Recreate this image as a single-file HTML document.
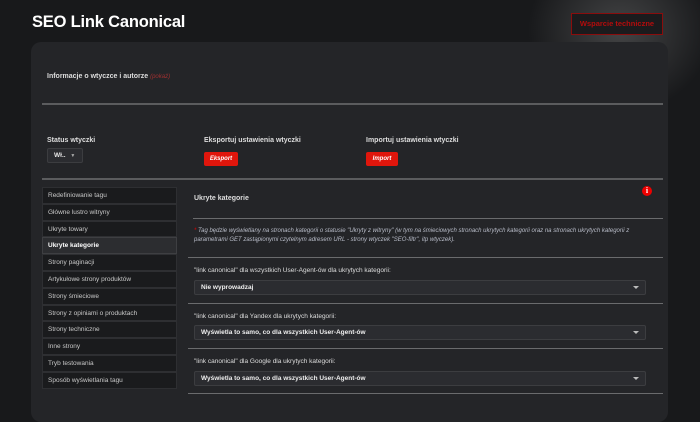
<!DOCTYPE html>
<html><head><meta charset="utf-8"><style>
*{box-sizing:border-box;margin:0;padding:0}
body{width:700px;height:415px;overflow:hidden;background:#18191b;font-family:"Liberation Sans",sans-serif;color:#e6e6e6;position:relative}
.glow{position:absolute;left:520px;top:-60px;width:200px;height:180px;background:radial-gradient(ellipse at center,rgba(120,120,120,.45),rgba(40,40,40,0) 65%)}
h1{position:absolute;left:32px;top:13px;font-size:16.5px;font-weight:bold;color:#fff;letter-spacing:-.2px}
.sup{position:absolute;left:571px;top:13px;width:92px;height:22px;border:1px solid #8a0d0d;background:#1b1b1d;color:#b40c0c;font-size:7.5px;font-weight:bold;text-align:center;line-height:20px}
.panel{position:absolute;left:31px;top:42px;width:637px;height:380px;background:#242528;border-radius:10px}
.a{position:absolute;font-size:7px;font-weight:bold;color:#ddd}
.hr{position:absolute;height:2px;background:#5b5c5e}
.btn{position:absolute;background:#e0160c;color:#fff;font-size:6px;font-style:italic;font-weight:bold;border-radius:2px;text-align:center;line-height:14px;height:14px}
.side{position:absolute;left:42px;top:187px;width:135px}
.side div{height:16.8px;border:1px solid #2e2f32;background:#1a1b1d;font-size:6.5px;color:#c8c8c8;padding-left:5px;line-height:15px;margin-bottom:0}
.side .on{background:#2c2d30;border-color:#3e3f42;color:#fff;font-weight:bold}
.sel{position:absolute;left:194px;width:452px;height:15px;background:#2b2c30;border:1px solid #3c3d40;border-radius:2px;font-size:6.5px;font-weight:bold;color:#eee;padding-left:6px;line-height:13px}
.sel:after{content:"";position:absolute;right:6px;top:5px;border:3px solid transparent;border-top:3.5px solid #bbb}
.lbl{position:absolute;left:194px;font-size:6.5px;color:#ddd}
</style></head><body>
<div class="glow"></div>
<h1>SEO Link Canonical</h1>
<div class="sup">Wsparcie techniczne</div>
<div class="panel"></div>
<div class="a" style="left:47px;top:73px">Informacje o wtyczce i autorze <span style="color:#a03030;font-style:italic;font-weight:normal;font-size:6px">(pokaż)</span></div>
<div class="hr" style="left:42px;top:103px;width:621px"></div>
<div class="a" style="left:47px;top:137px">Status wtyczki</div>
<div style="position:absolute;left:47px;top:148px;width:36px;height:15px;background:#2b2c30;border:1px solid #3c3d40;border-radius:2px;font-size:6.5px;font-weight:bold;padding-left:6px;line-height:13px">Wł.. <span style="font-size:5px;color:#aaa;margin-left:3px">▼</span></div>
<div class="a" style="left:204px;top:137px">Eksportuj ustawienia wtyczki</div>
<div class="btn" style="left:204px;top:152px;width:34px">Eksport</div>
<div class="a" style="left:366px;top:137px">Importuj ustawienia wtyczki</div>
<div class="btn" style="left:366px;top:152px;width:32px">Import</div>
<div class="hr" style="left:42px;top:178px;width:621px"></div>
<div class="side">
<div>Redefiniowanie tagu</div><div>Główne lustro witryny</div><div>Ukryte towary</div><div class="on">Ukryte kategorie</div><div>Strony paginacji</div><div>Artykułowe strony produktów</div><div>Strony śmieciowe</div><div>Strony z opiniami o produktach</div><div>Strony techniczne</div><div>Inne strony</div><div>Tryb testowania</div><div>Sposób wyświetlania tagu</div>
</div>
<div class="a" style="left:194px;top:195px">Ukryte kategorie</div>
<div style="position:absolute;left:642px;top:186px;width:10px;height:10px;border-radius:50%;background:#e00;color:#fff;font-size:8px;font-weight:bold;text-align:center;line-height:10px;font-family:'Liberation Serif',serif">i</div>
<div class="hr" style="left:193px;top:218px;width:470px;height:1px;background:#6a6b6d"></div>
<div style="position:absolute;left:194px;top:227px;width:460px;font-size:6px;font-style:italic;color:#b8bcc8;line-height:9px"><span style="color:#e00">*</span> Tag będzie wyświetlany na stronach kategorii o statusie "Ukryty z witryny" (w tym na śmieciowych stronach ukrytych kategorii oraz na stronach ukrytych kategorii z parametrami GET zastąpionymi czytelnym adresem URL - strony wtyczek "SEO-filtr", itp wtyczek).</div>
<div class="hr" style="left:188px;top:257px;width:475px;height:1px;background:#6a6b6d"></div>
<div class="lbl" style="top:267px">"link canonical" dla wszystkich User-Agent-ów dla ukrytych kategorii:</div>
<div class="sel" style="top:280px">Nie wyprowadzaj</div>
<div class="hr" style="left:188px;top:303px;width:475px;height:1px;background:#6a6b6d"></div>
<div class="lbl" style="top:313px">"link canonical" dla Yandex dla ukrytych kategorii:</div>
<div class="sel" style="top:325px">Wyświetla to samo, co dla wszystkich User-Agent-ów</div>
<div class="hr" style="left:188px;top:348px;width:475px;height:1px;background:#6a6b6d"></div>
<div class="lbl" style="top:358px">"link canonical" dla Google dla ukrytych kategorii:</div>
<div class="sel" style="top:371px">Wyświetla to samo, co dla wszystkich User-Agent-ów</div>
<div class="hr" style="left:188px;top:393px;width:475px;height:1px;background:#6a6b6d"></div>
</body></html>
